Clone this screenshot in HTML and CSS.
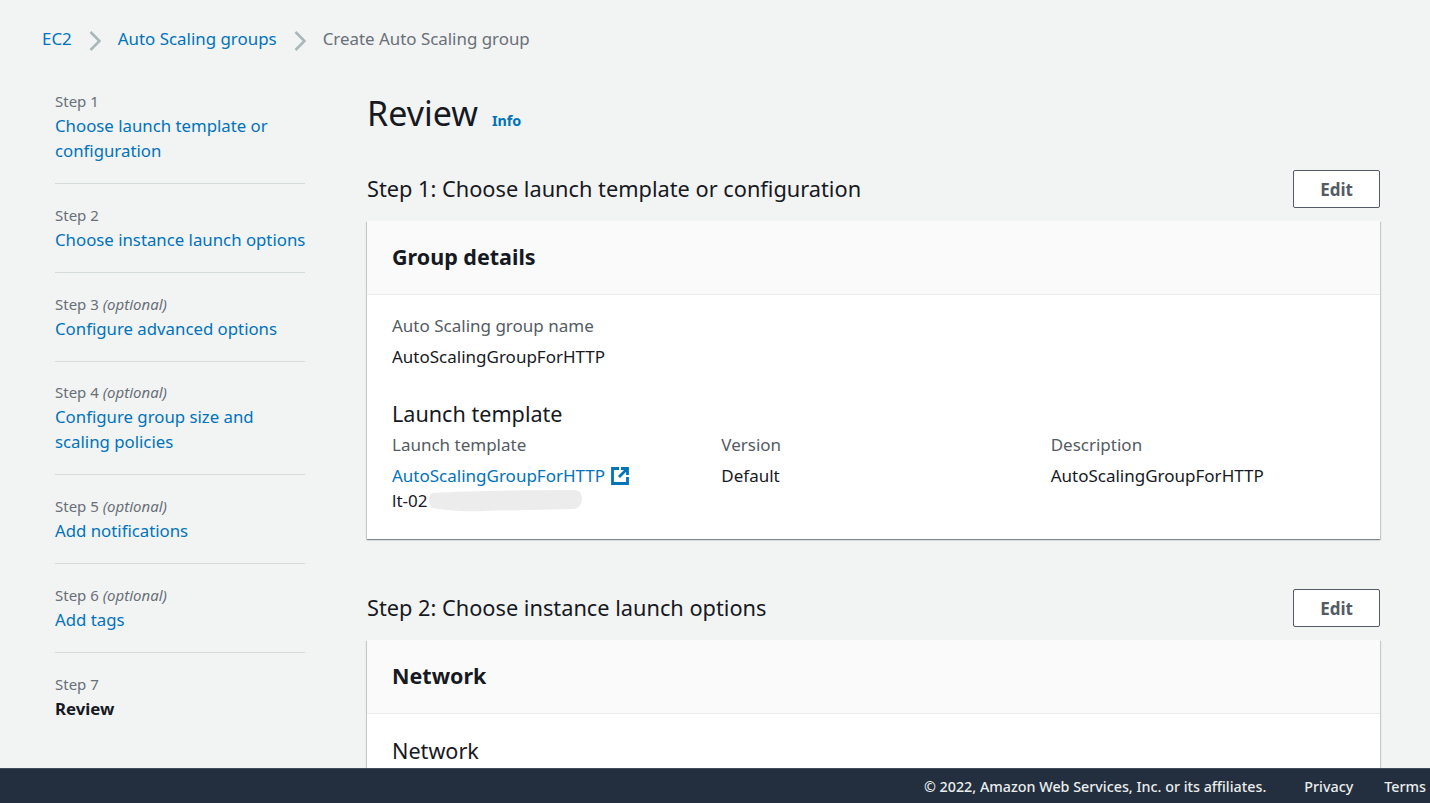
FILE: index.html
```html
<!DOCTYPE html>
<html lang="en">
<head>
<meta charset="utf-8">
<title>Create Auto Scaling group</title>
<link rel="stylesheet" href="styles.css">
</head>
<body>
<div class="page">
  <nav class="crumbs">
    <a class="link">EC2</a>
    <svg class="chev" viewBox="0 0 12 22"><path d="M1.5 2l9 9-9 9"/></svg>
    <a class="link">Auto Scaling groups</a>
    <svg class="chev" viewBox="0 0 12 22"><path d="M1.5 2l9 9-9 9"/></svg>
    <span class="crumb-current">Create Auto Scaling group</span>
  </nav>
  <div class="layout">
    <ol class="steps">
      <li class="step"><div class="step-label">Step 1</div><a class="link">Choose launch template or configuration</a></li>
      <li class="step"><div class="step-label">Step 2</div><a class="link nowrap">Choose instance launch options</a></li>
      <li class="step"><div class="step-label">Step 3 <i>(optional)</i></div><a class="link">Configure advanced options</a></li>
      <li class="step"><div class="step-label">Step 4 <i>(optional)</i></div><a class="link">Configure group size and scaling policies</a></li>
      <li class="step"><div class="step-label">Step 5 <i>(optional)</i></div><a class="link">Add notifications</a></li>
      <li class="step"><div class="step-label">Step 6 <i>(optional)</i></div><a class="link">Add tags</a></li>
      <li class="step step-last"><div class="step-label">Step 7</div><strong class="step-active">Review</strong></li>
    </ol>
    <main class="content">
      <header class="title-row"><h1 class="title">Review</h1><a class="info">Info</a></header>
      <section class="section">
        <div class="section-head"><h2 class="section-title">Step 1: Choose launch template or configuration</h2><button class="edit">Edit</button></div>
        <div class="card">
          <div class="card-head"><h3 class="card-title">Group details</h3></div>
          <div class="card-body">
            <div class="label">Auto Scaling group name</div>
            <div class="value">AutoScalingGroupForHTTP</div>
            <h4 class="sub">Launch template</h4>
            <div class="cols">
              <div>
                <div class="label">Launch template</div>
                <div class="value"><a class="link">AutoScalingGroupForHTTP</a><svg class="ext" viewBox="0 0 18 18"><path d="M8 1.5H1.5v15h15V10M10 1.5h6.5V8M16.5 1.5L8 10"/></svg></div>
                <div class="value-tight">lt-02<svg class="blob" viewBox="0 0 153 22"><path d="M3 3C40 1 100 0 145 0c6 0 8 4 8 9s-3 9-8 10c-30 1-60 1-90 2C35 22 15 20 3 18-1 14-1 6 3 3z"/></svg></div>
              </div>
              <div>
                <div class="label">Version</div>
                <div class="value">Default</div>
              </div>
              <div>
                <div class="label">Description</div>
                <div class="value">AutoScalingGroupForHTTP</div>
              </div>
            </div>
          </div>
        </div>
      </section>
      <section class="section section-second">
        <div class="section-head"><h2 class="section-title">Step 2: Choose instance launch options</h2><button class="edit">Edit</button></div>
        <div class="card">
          <div class="card-head"><h3 class="card-title">Network</h3></div>
          <div class="card-body">
            <h4 class="sub sub-first">Network</h4>
          </div>
        </div>
      </section>
    </main>
  </div>
</div>
<footer class="footer">
  <span>© 2022, Amazon Web Services, Inc. or its affiliates.</span>
  <a class="foot-link foot-privacy">Privacy</a>
  <a class="foot-link foot-terms">Terms</a>
</footer>
</body>
</html>
```
FILE: styles.css
```css
* { box-sizing: border-box; }
html, body { height: 100%; margin: 0; }
body {
  display: flex;
  flex-direction: column;
  height: 803px;
  overflow: hidden;
  background: #f2f3f3;
  color: #16191f;
  font-family: "Noto Sans", "Open Sans", sans-serif;
  font-size: 17px;
  line-height: 25px;
}
.page { flex: 1; min-height: 0; overflow: hidden; }
.link { color: #0073bb; text-decoration: none; }
.nowrap { white-space: nowrap; }
.crumbs {
  display: flex;
  align-items: center;
  height: 25px;
  margin: 26px 0 0 42px;
  font-size: 16.9px;
}
.chev { flex: none; width: 12px; height: 22px; margin: 4px 17px 0 17px; fill: none; stroke: #aab7b8; stroke-width: 2.6; }
.crumb-current { color: #687078; }
.layout { display: flex; margin-top: 29px; }
.steps {
  list-style: none;
  flex: none;
  width: 250px;
  margin: 11px 0 0 55px;
  padding: 0;
  font-size: 16.8px;
}
.step { padding: 0 0 20px; margin-bottom: 20.8px; border-bottom: 1px solid #d5dbdb; }
.step-last { border-bottom: 0; padding: 0; margin: 0; }
.step-label { color: #687078; font-size: 15px; line-height: 20px; margin-bottom: 2px; }
.step-active { font-weight: 700; color: #16191f; }
.content { flex: none; width: 1013px; margin-left: 62px; }
.title-row { display: flex; align-items: baseline; height: 50px; margin-top: 8px; }
.title { margin: 0; font-size: 34px; font-weight: 400; line-height: 50px; }
.info { margin-left: 14px; color: #0073bb; font-size: 14.3px; font-weight: 700; }
.section { margin-top: 32px; }
.section-second { margin-top: 50px; }
.section-head { display: flex; align-items: center; justify-content: space-between; height: 38px; margin-bottom: 13px; }
.section-title { margin: 0; font-size: 21.75px; font-weight: 400; line-height: 28px; }
.edit {
  width: 87px;
  height: 38px;
  padding: 0;
  border: 1px solid #545b64;
  border-radius: 2px;
  background: #fff;
  color: #545b64;
  font: 700 17px/25px "Noto Sans", "Open Sans", sans-serif;
}
.card { background: #fff; box-shadow: 0 1px 1px 0 rgba(0,28,36,.3), 1px 1px 1px 0 rgba(0,28,36,.15), -1px 1px 1px 0 rgba(0,28,36,.15); }
.card-head { height: 74px; padding: 0 25px; display: flex; align-items: center; background: #fafafa; border-bottom: 1px solid #eaeded; }
.card-title { margin: 0; font-size: 21.5px; font-weight: 700; line-height: 28px; position: relative; top: -1px; }
.card-body { padding: 18px 0 26px 25px; }
.label { color: #545b64; }
.value { margin-top: 6px; display: flex; align-items: center; }
.value-tight { display: flex; align-items: center; }
.sub { margin: 31px 0 4px; font-size: 21.6px; font-weight: 400; line-height: 28px; }
.sub-first { margin: 5px 0 120px; }
.cols { display: grid; grid-template-columns: repeat(3, 1fr); column-gap: 0; }
.ext { width: 18px; height: 18px; margin-left: 6px; fill: none; stroke: #0073bb; stroke-width: 2.8; }
.blob { width: 153px; height: 22px; margin-left: 2px; fill: #ececec; }
.footer {
  flex: none;
  display: flex;
  align-items: center;
  justify-content: flex-end;
  height: 35px;
  padding-right: 4px;
  background: #232f3e;
  border-top: 1px solid #414d5c;
  color: #eaeded;
  font-size: 14.3px;
  font-weight: 500;
  white-space: nowrap;
}
.foot-link { color: #eaeded; }
.foot-privacy { margin-left: 38px; }
.foot-terms { margin-left: 31px; }
```
